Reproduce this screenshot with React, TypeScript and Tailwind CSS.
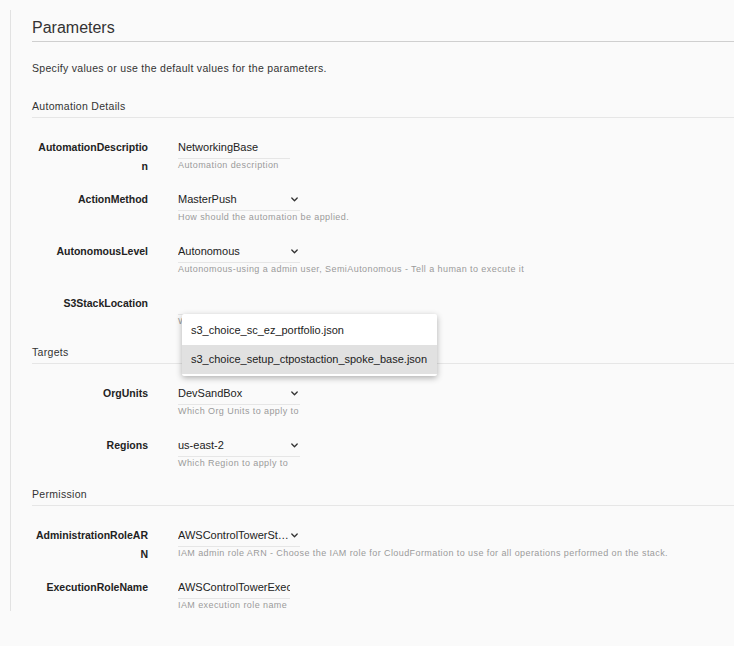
import React from "react";

const FONT = { fontFamily: '"Liberation Sans", Arial, Helvetica, sans-serif' };

function Chevron() {
  return (
    <svg width="7" height="5" viewBox="0 0 7 5" className="shrink-0">
      <polyline points="0.8,1 3.5,3.8 6.2,1" fill="none" stroke="#333" strokeWidth="1.3" strokeLinecap="round" strokeLinejoin="round" />
    </svg>
  );
}

type Row = {
  label: string[];
  value: string;
  help: string;
  select?: boolean;
  chevron?: boolean;
  truncate?: boolean;
  dropdown?: boolean;
};

function FieldRow({ row }: { row: Row }) {
  return (
    <div className="flex h-[34px] items-start">
      <div className="w-[116px] shrink-0 pt-[1px] text-right text-[10.5px] leading-[19px] font-bold text-[#222]">
        {row.label.map((l, i) => (
          <div key={i}>{l}</div>
        ))}
      </div>
      <div className="relative ml-[30px] pt-[3px]">
        <div
          className={`flex h-[19px] items-start border-b border-[#e6e6e6] ${row.select ? "w-[122px]" : "w-[112px]"}`}
        >
          <div
            className={`min-w-0 flex-1 overflow-hidden whitespace-nowrap text-[11px] leading-[14px] text-[#222] ${row.truncate ? "text-ellipsis" : ""}`}
          >
            {row.value}
          </div>
          {row.chevron && (
            <div className="flex h-[14px] items-center pr-[2px] pl-[1px]">
              <Chevron />
            </div>
          )}
        </div>
        <div className="whitespace-nowrap text-[9px] leading-[12px] tracking-[0.42px] text-[#9a9a9a]">{row.help}</div>
        {row.dropdown && (
          <div className="absolute left-[4px] top-[21px] z-10 w-[255px] rounded-[2px] bg-white py-[2px] shadow-[0_2px_6px_rgba(0,0,0,0.3)]">
            <div className="flex h-[29px] items-center pl-[9px] text-[11px] text-[#222]">
              s3_choice_sc_ez_portfolio.json
            </div>
            <div className="flex h-[29px] items-center bg-[#e1e1e1] pl-[9px] text-[11px] text-[#222]">
              s3_choice_setup_ctpostaction_spoke_base.json
            </div>
          </div>
        )}
      </div>
    </div>
  );
}

function Section({ title, rows }: { title: string; rows: Row[] }) {
  return (
    <div>
      <div className="border-b border-[#e6e6e6] pb-[4px] text-[10.5px] leading-[14px] tracking-[0.3px] text-[#333]">
        {title}
      </div>
      <div className="mt-[19px] flex flex-col gap-[18px]">
        {rows.map((r, i) => (
          <FieldRow key={i} row={r} />
        ))}
      </div>
    </div>
  );
}

export default function App() {
  const automation: Row[] = [
    { label: ["AutomationDescriptio", "n"], value: "NetworkingBase", help: "Automation description" },
    {
      label: ["ActionMethod"],
      value: "MasterPush",
      help: "How should the automation be applied.",
      select: true,
      chevron: true,
    },
    {
      label: ["AutonomousLevel"],
      value: "Autonomous",
      help: "Autonomous-using a admin user, SemiAutonomous - Tell a human to execute it",
      select: true,
      chevron: true,
    },
    { label: ["S3StackLocation"], value: "", help: "Which S3 stack file to use", select: true, dropdown: true },
  ];
  const targets: Row[] = [
    { label: ["OrgUnits"], value: "DevSandBox", help: "Which Org Units to apply to", select: true, chevron: true },
    { label: ["Regions"], value: "us-east-2", help: "Which Region to apply to", select: true, chevron: true },
  ];
  const permission: Row[] = [
    {
      label: ["AdministrationRoleAR", "N"],
      value: "AWSControlTowerStackSetRole",
      help: "IAM admin role ARN - Choose the IAM role for CloudFormation to use for all operations performed on the stack.",
      select: true,
      chevron: true,
      truncate: true,
    },
    { label: ["ExecutionRoleName"], value: "AWSControlTowerExecution", help: "IAM execution role name" },
  ];

  return (
    <div className="min-h-[646px] w-full overflow-hidden bg-[#fafafa]" style={FONT}>
      <div className="ml-[10px] mt-[10px] border-l border-[#e2e2e2] pl-[21px]">
        <div className="border-b border-[#cfcfcf] pt-[8px] pb-[3px] text-[16px] leading-[20px] text-[#333]">
          Parameters
        </div>
        <div className="mt-[19px] text-[10.5px] leading-[14px] tracking-[0.3px] text-[#333]">
          Specify values or use the default values for the parameters.
        </div>
        <div className="mt-[24px]">
          <Section title="Automation Details" rows={automation} />
        </div>
        <div className="mt-[18px]">
          <Section title="Targets" rows={targets} />
        </div>
        <div className="mt-[18px]">
          <Section title="Permission" rows={permission} />
        </div>
      </div>
    </div>
  );
}
